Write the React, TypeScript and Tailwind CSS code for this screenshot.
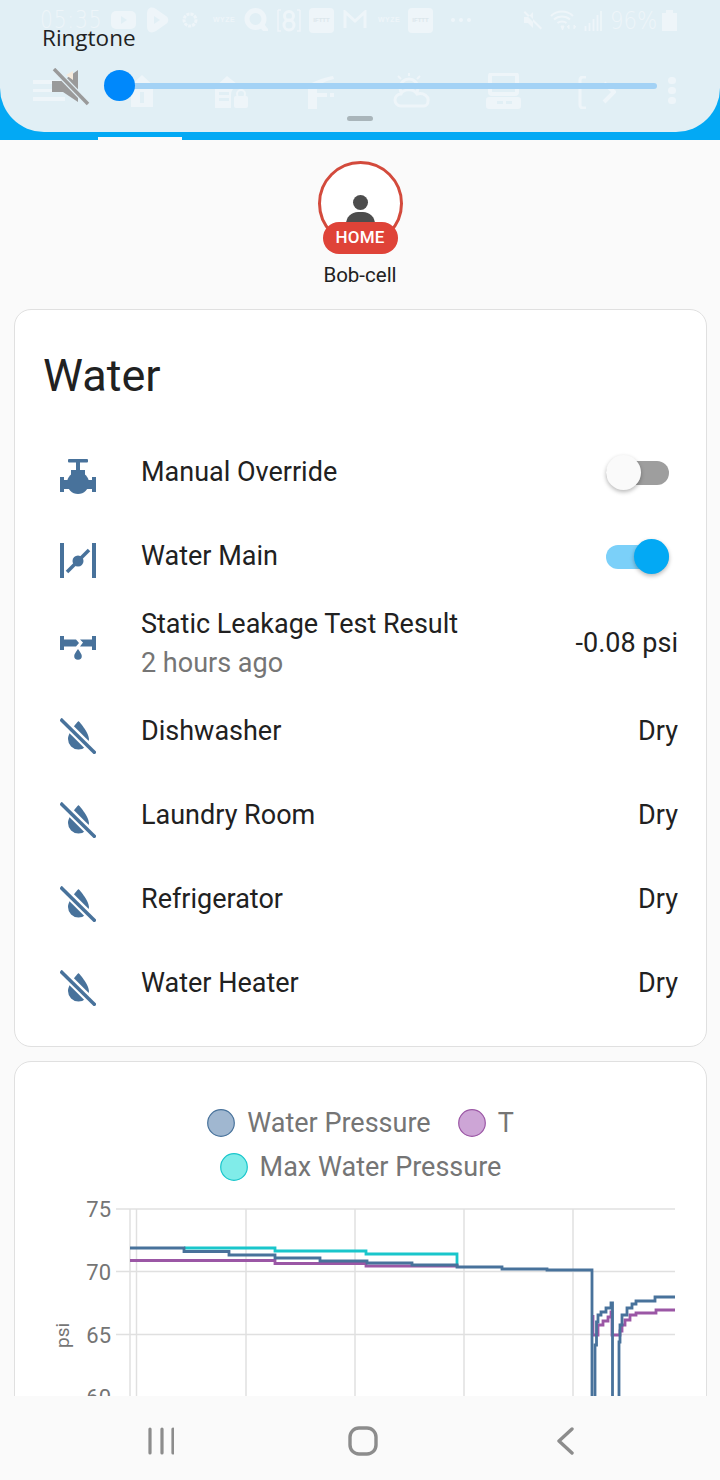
const faint = "#eef5f9";

function Ic({ d, w = 24, h = 24, vb, className = "" }: { d: string; w?: number; h?: number; vb?: string; className?: string }) {
  return (
    <svg width={w} height={h} viewBox={vb ?? "0 0 24 24"} className={className} fill="currentColor">
      <path d={d} />
    </svg>
  );
}

function StatusBar() {
  return (
    <div className="relative h-[40px] text-[#eef5f9]">
      <div className="flex h-[40px] items-center pl-[40px]">
        <span className="w-[60px] text-[24px] font-light leading-[18px] tracking-[1px] font-['DejaVu_Sans',sans-serif] scale-x-[0.84] origin-left whitespace-nowrap">05:35</span>
        <svg width="25" height="18" viewBox="0 0 25 18" className="ml-[11px]">
          <rect width="25" height="18" rx="5" fill={faint} />
          <path d="M10 5l6 4-6 4z" fill="#e1eff5" />
        </svg>
        <svg width="24" height="26" viewBox="0 0 24 26" className="ml-[9px]">
          <path d="M2 7c0-6 4-8 9-5l10 7c3 2 3 6 0 8l-10 7c-5 3-9 1-9-5z" fill={faint} />
          <path d="M9 9l6 4-6 4z" fill="#e1eff5" />
        </svg>
        <svg width="16" height="16" viewBox="0 0 16 16" className="ml-[13px]">
          <circle cx="8" cy="8" r="6" fill="none" stroke={faint} strokeWidth="3" strokeDasharray="3 1" />
        </svg>
        <span className="ml-[15px] w-[20px] text-[7px] tracking-[0.5px] font-bold font-['Liberation_Sans',sans-serif]">WYZE</span>
        <svg width="24" height="24" viewBox="0 0 24 24" className="ml-[11px]">
          <circle cx="11.5" cy="11" r="8.5" fill="none" stroke={faint} strokeWidth="5" />
          <path d="M15 18l4 5h5v-2l-4-5z" fill={faint} />
        </svg>
        <svg width="24" height="23" viewBox="0 0 24 23" className="ml-[9px]">
          <path d="M1 1h3M1 1v21h3M23 1h-3M23 1v21h-3" fill="none" stroke={faint} strokeWidth="1.5" />
          <circle cx="12" cy="7" r="4.5" fill="none" stroke={faint} strokeWidth="3" />
          <circle cx="12" cy="16" r="5" fill="none" stroke={faint} strokeWidth="3" />
        </svg>
        <div className="ml-[8px] w-[25px] h-[25px] rounded-[4px] bg-[#eef5f9] flex items-center justify-center">
          <span className="text-[6px] font-bold text-[#dce7ec] font-['Liberation_Sans',sans-serif]">IFTTT</span>
        </div>
        <svg width="24" height="20" viewBox="0 0 24 20" className="ml-[9px]">
          <path d="M2 18V2l10 9 10-9v16" fill="none" stroke={faint} strokeWidth="3" />
        </svg>
        <span className="ml-[11px] w-[20px] text-[7px] tracking-[0.5px] font-bold font-['Liberation_Sans',sans-serif]">WYZE</span>
        <div className="ml-[10px] w-[25px] h-[25px] rounded-[4px] bg-[#eef5f9] flex items-center justify-center">
          <span className="text-[6px] font-bold text-[#dce7ec] font-['Liberation_Sans',sans-serif]">IFTTT</span>
        </div>
        <div className="ml-[18px] flex gap-[4px]">
          <span className="w-[4px] h-[4px] rounded-full bg-[#eef5f9]" />
          <span className="w-[4px] h-[4px] rounded-full bg-[#eef5f9]" />
          <span className="w-[4px] h-[4px] rounded-full bg-[#eef5f9]" />
        </div>
        <Ic d="M3,9H7L12,4V20L7,15H3V9M4,3L2.6,4.4L19.6,21.4L21,20Z" w={24} h={24} className="ml-[50px]" />
        <svg width="28" height="22" viewBox="0 0 28 22" className="ml-[5px]">
          <path d="M1 7c6-6 16-6 22 0M4 10.5c4.500-4 11.500-4 16 0M7.500 14c2.500-2 6.500-2 9 0" fill="none" stroke={faint} strokeWidth="2" />
          <path d="M11 17h3l-1.500 4zM19 20v-4l-2 2M24 20v-4l2 2" fill={faint} stroke={faint} strokeWidth="1" />
        </svg>
        <svg width="18" height="21" viewBox="0 0 18 21" className="ml-[6px]">
          <path d="M1.500 21v-5M5.500 21v-8M9.500 21v-12M13.500 21v-16M17 21V1" stroke={faint} strokeWidth="1.800" />
        </svg>
        <span className="ml-[8px] w-[48px] text-[25px] leading-none font-light whitespace-nowrap font-['DejaVu_Sans',sans-serif] scale-x-[0.85] origin-left">96%</span>
        <svg width="15" height="21" viewBox="0 0 15 21" className="ml-[4px]">
          <path d="M0 3h4V0h7v3h4v18H0z" fill={faint} />
        </svg>
      </div>
    </div>
  );
}

function FaintToolbar() {
  return (
    <div className="flex items-start h-[40px] mt-[33px] pl-[33px] text-[#eef5f9]">
      <div className="mt-[7px] w-[32px] flex flex-col gap-[5px]">
        <span className="h-[3.500px] bg-[#eef5f9]" />
        <span className="h-[3.500px] bg-[#eef5f9]" />
        <span className="h-[3.500px] bg-[#eef5f9]" />
      </div>
      <svg width="30" height="32" viewBox="0 0 30 32" className="ml-[62px] mt-[2px]">
        <path d="M15 0L30 14h-4v18H4V14H0zM13 17v11h4V17z" fill={faint} />
      </svg>
      <svg width="36" height="32" viewBox="0 0 36 32" className="ml-[56px] mt-[3px]">
        <path d="M14 0L24 8v4h-3c-2 2-3 4-3 7v13H2V13H0zM6 16v3h10v-3zM6 22v3h10v-3z" fill={faint} />
        <rect x="21" y="20" width="14" height="12" rx="2" fill={faint} />
        <circle cx="28" cy="18" r="4" fill="none" stroke={faint} strokeWidth="2" />
      </svg>
      <svg width="26" height="33" viewBox="0 0 26 33" className="ml-[59px] mt-[3px]">
        <path d="M0 10C6 5 14 2 25 0l1 3C18 5 14 7 9 11v22H0z" fill={faint} />
        <path d="M9 17h10v4H9zM22 17h4v4h-4z" fill={faint} />
      </svg>
      <svg width="37" height="36" viewBox="0 0 37 36" className="ml-[59px]">
        <circle cx="16" cy="15" r="9" fill="none" stroke={faint} strokeWidth="3" />
        <path d="M5 3l3 3M16 0v3M27 3l-3 3M1 15h2" stroke={faint} strokeWidth="2" />
        <path d="M8 33a6 6 0 0 1 0-12c2-5 12-6 16 0 7-2 12 3 11 7 0 3-2 5-4 5z" fill="#e1eff5" stroke={faint} strokeWidth="3" />
      </svg>
      <svg width="35" height="36" viewBox="0 0 35 36" className="ml-[56px]">
        <rect x="4" y="1" width="27" height="20" rx="2" fill="none" stroke={faint} strokeWidth="4" />
        <path d="M3 24h29a3 3 0 0 1 3 3v6a3 3 0 0 1-3 3H3a3 3 0 0 1-3-3v-6a3 3 0 0 1 3-3zM11 28v3h6v-3zM20 28v3h6v-3z" fill={faint} fillRule="evenodd" />
      </svg>
      <svg width="38" height="33" viewBox="0 0 38 33" className="ml-[57px] mt-[3px]">
        <path d="M8 1H5a3 3 0 0 0-3 3v25a3 3 0 0 0 3 3h3" fill="none" stroke={faint} strokeWidth="3" />
        <path d="M26 7l10 9-10 10" fill="none" stroke={faint} strokeWidth="4" />
      </svg>
      <div className="ml-[52px] mt-[4px] flex flex-col gap-[3px]">
        <span className="w-[8px] h-[7px] rounded-full bg-[#eef5f9]" />
        <span className="w-[8px] h-[7px] rounded-full bg-[#eef5f9]" />
        <span className="w-[8px] h-[7px] rounded-full bg-[#eef5f9]" />
      </div>
    </div>
  );
}

function Header() {
  return (
    <header className="relative h-[140px] shrink-0 bg-[#03a9f4]">
      <div className="relative h-[132px] rounded-b-[44px] bg-[#e1eff5] overflow-hidden">
        <StatusBar />
        <FaintToolbar />
        <div className="absolute inset-0">
          <div className="absolute left-[42px] top-[27px] text-[22.500px] leading-[22px] text-[#222] font-['Open_Sans',sans-serif]">Ringtone</div>
          <svg width="38" height="38" viewBox="0 0 38 38" className="absolute left-[52px] top-[68px]">
            <path d="M0 13h11L26 2v32L11 24H0z" fill="#9a9a9a" />
            <path d="M14 7l7-4v9z" fill="#f5eadc" />
            <path d="M1 0l35 36" stroke="#e1eff5" strokeWidth="6" />
            <path d="M2 1l34 35" stroke="#9a9a9a" strokeWidth="3.500" />
          </svg>
          <div className="absolute left-[119px] top-[83px] w-[538px] h-[6px] rounded-full bg-[#a3d2f5]" />
          <div className="absolute left-[104px] top-[70px] w-[31px] h-[31px] rounded-full bg-[#0088fb]" />
          <div className="absolute left-[347px] top-[116px] w-[26px] h-[5px] rounded-full bg-[#a9b5ba]" />
        </div>
      </div>
      <div className="absolute left-[98px] bottom-0 w-[84px] h-[3px] bg-[#fafafa]" />
    </header>
  );
}

function Avatar() {
  return (
    <section className="flex flex-col items-center pt-[21px] h-[169px]">
      <div className="relative w-[85px] h-[85px] rounded-full border-[3px] border-[#d34a3c] bg-white overflow-hidden">
        <div className="absolute left-[32px] top-[31px] w-[15px] h-[15px] rounded-full bg-[#4d4d4d]" />
        <div className="absolute left-[25px] top-[48px] w-[29px] h-[24px] rounded-t-[12px] bg-[#4d4d4d]" />
      </div>
      <div className="relative z-10 -mt-[24px] w-[75px] h-[32px] rounded-full bg-[#df4338] text-white text-[17px] font-medium tracking-[0.2px] flex items-center justify-center">HOME</div>
      <div className="mt-[8px] text-[20.500px] leading-[26px] text-[#212121]">Bob-cell</div>
    </section>
  );
}

function ValveIcon() {
  return (
    <svg width="36" height="36" viewBox="0 0 36 36" fill="#48729b" className="mt-[10px] shrink-0">
      <rect x="8" y="0" width="20" height="3.500" rx="1" />
      <rect x="16" y="3" width="4" height="9" />
      <rect x="11" y="11" width="14" height="5" />
      <circle cx="18" cy="24" r="11" />
      <rect x="0" y="18" width="4" height="15" />
      <rect x="32" y="18" width="4" height="15" />
      <rect x="4" y="21" width="28" height="9" />
    </svg>
  );
}
function MainIcon() {
  return (
    <svg width="36" height="36" viewBox="0 0 36 36" fill="#48729b" className="mt-[10px] shrink-0">
      <rect x="0" y="0" width="4" height="35" />
      <rect x="32" y="0" width="4" height="35" />
      <circle cx="18" cy="18" r="5.500" />
      <path d="M7 29L29 7" stroke="#48729b" strokeWidth="3.500" />
    </svg>
  );
}
function LeakIcon() {
  return (
    <svg width="36" height="26" viewBox="0 0 36 26" fill="#48729b" className="mt-[10px] shrink-0">
      <rect x="0" y="0" width="4" height="14" />
      <rect x="32" y="0" width="4" height="14" />
      <path d="M4 3.500h12l3 3.500-3 3.500H4z" />
      <path d="M32 3.500H20l3 3-3 4h12z" />
      <path d="M18 13c2 3 3.800 5 3.800 7a3.800 3.800 0 0 1-7.600 0c0-2 1.800-4 3.800-7z" />
    </svg>
  );
}

function Row({ icon, title, sub, right, tall }: { icon: React.ReactNode; title: string; sub?: string; right: React.ReactNode; tall?: boolean }) {
  return (
    <div className={`flex items-center ${tall ? "h-[91px]" : "h-[84px]"}`}>
      <div className="w-[126px] pl-[45px] pr-[45px] h-full flex items-center justify-center shrink-0">{icon}</div>
      <div className="flex-1 min-w-0">
        <div className="text-[27px] leading-[39px] text-[#212121]">{title}</div>
        {sub && <div className="text-[27px] leading-[39px] text-[#757575]">{sub}</div>}
      </div>
      <div className="text-[27px] text-[#212121]">{right}</div>
    </div>
  );
}

function Toggle({ on }: { on: boolean }) {
  return (
    <div className={`relative w-[63px] h-[24px] mr-[9px] mt-[1px] rounded-full ${on ? "bg-[#7bd0f9]" : "bg-[#9e9e9e]"}`}>
      <div
        className={`absolute -top-[5.500px] w-[35px] h-[35px] rounded-full shadow-[0_2px_4px_rgba(0,0,0,0.28)] ${on ? "right-0 bg-[#03a9f4]" : "left-0 bg-[#fafafa]"}`}
      />
    </div>
  );
}

function DropOff() {
  return (
    <svg width="36" height="36" viewBox="0 0 36 36" className="mt-[10px] shrink-0">
      <path d="M18.5 3C18.5 3 29 14 29 21A10.500 10.500 0 0 1 8 21C8 14 18.500 3 18.500 3Z" fill="#48729b" />
      <path d="M0 0L36 36" stroke="#ffffff" strokeWidth="8" />
      <path d="M0.500 1L35.500 35.500" stroke="#48729b" strokeWidth="3.500" />
    </svg>
  );
}

function WaterCard() {
  return (
    <section className="ml-[14px] mr-[13px] h-[738px] rounded-[17px] border border-[#e0e0e0] bg-white pr-[28px]">
      <h1 className="pl-[28px] pt-[38px] h-[120px] text-[45px] leading-[56px] font-normal text-[#212121]">Water</h1>
      <Row icon={<ValveIcon />} title="Manual Override" right={<Toggle on={false} />} />
      <Row icon={<MainIcon />} title="Water Main" right={<Toggle on={true} />} />
      <Row icon={<LeakIcon />} title="Static Leakage Test Result" sub="2 hours ago" right="-0.08 psi" tall />
      <Row icon={<DropOff />} title="Dishwasher" right="Dry" />
      <Row icon={<DropOff />} title="Laundry Room" right="Dry" />
      <Row icon={<DropOff />} title="Refrigerator" right="Dry" />
      <Row icon={<DropOff />} title="Water Heater" right="Dry" />
    </section>
  );
}

function Legend({ fill, stroke, label }: { fill: string; stroke: string; label: string }) {
  return (
    <div className="flex items-center gap-[12px]">
      <svg width="28" height="28" viewBox="0 0 28 28">
        <circle cx="14" cy="14" r="13.300" fill={fill} stroke={stroke} strokeWidth="1.200" />
      </svg>
      <span className="text-[27px] leading-[44px] text-[#757575]">{label}</span>
    </div>
  );
}

const BLUE_A =
  "130,1248 184,1248 184,1251.500 229,1251.500 229,1255 275,1255 275,1258 320,1258 320,1261 367,1261 367,1263 412,1263 412,1265 457,1265 457,1267 502,1267 502,1269 547,1269 547,1270 592,1270 592,1400";
const BLUE_B =
  "595,1400 595,1345 596.500,1345 596.500,1322 598,1322 598,1315 601,1315 601,1312 606,1312 606,1308 611,1308 611,1303 612.500,1303 612.500,1400";
const BLUE_C =
  "619,1400 619,1342 620,1342 620,1325 622,1325 622,1315 627,1315 627,1308 632,1308 632,1304 636,1304 636,1301 655,1301 655,1297 675,1297";
const TEAL = "184,1248 275,1248 275,1251 366,1251 366,1254 457,1254 457,1266";
const PURPLE_A =
  "130,1260.500 275,1260.500 275,1263.500 366,1263.500 366,1266 457,1266 457,1267";
const PURPLE_B =
  "593,1315 593,1335 598,1335 598,1325 603,1325 603,1321 608,1321 608,1317 611,1317 611,1312 612,1312 612,1335 620,1335 620,1331 622,1331 622,1325 625,1325 625,1320 630,1320 630,1315 636,1315 636,1313 656,1313 656,1310 675,1310";

function Chart() {
  const grid = "#e0e0e0";
  return (
    <svg width="691" height="230" viewBox="15 1195 691 230" className="block">
      {[1209, 1271.5, 1334.5, 1397].map((y) => (
        <line key={y} x1="116" x2="675" y1={y} y2={y} stroke={grid} strokeWidth="1.500" />
      ))}
      {[130, 136.5, 246, 355, 464, 573].map((x) => (
        <line key={x} x1={x} x2={x} y1="1209" y2="1420" stroke={grid} strokeWidth="1.500" />
      ))}
      {[
        ["75", 1209],
        ["70", 1271.5],
        ["65", 1334.5],
        ["60", 1397],
      ].map(([t, y]) => (
        <text key={t} x="111" y={Number(y) + 8} textAnchor="end" fontSize="22" fill="#757575" fontFamily="Roboto, sans-serif">
          {t}
        </text>
      ))}
      <text x="0" y="0" transform="translate(69 1348) rotate(-90)" fontSize="19" fill="#757575" fontFamily="Roboto, sans-serif">
        psi
      </text>
      <polyline points={TEAL} fill="none" stroke="#19c6cb" strokeWidth="2.800" />
      <polyline points={PURPLE_A} fill="none" stroke="#9b57a5" strokeWidth="2.800" />
      <polyline points={PURPLE_B} fill="none" stroke="#9b57a5" strokeWidth="2.800" />
      <polyline points={BLUE_A} fill="none" stroke="#48729b" strokeWidth="2.800" />
      <polyline points={BLUE_B} fill="none" stroke="#48729b" strokeWidth="2.800" />
      <polyline points={BLUE_C} fill="none" stroke="#48729b" strokeWidth="2.800" />
    </svg>
  );
}

function ChartCard() {
  return (
    <section className="mt-[14px] ml-[14px] mr-[13px] h-[420px] rounded-[17px] border border-[#e0e0e0] bg-white">
      <div className="pt-[39px] h-[133px] flex flex-col items-center">
        <div className="flex items-center gap-[27px]">
          <Legend fill="#a0b7d0" stroke="#48729b" label="Water Pressure" />
          <Legend fill="#cda5d6" stroke="#9b57a5" label="T" />
        </div>
        <Legend fill="#80ece9" stroke="#19c6cb" label="Max Water Pressure" />
      </div>
      <Chart />
    </section>
  );
}

function NavBar() {
  return (
    <nav className="relative z-10 h-[84px] shrink-0 bg-[#fafafa] flex items-start">
      <svg width="26" height="28" viewBox="0 0 26 28" className="ml-[148px] mt-[31px]">
        <path d="M2 2v24M14 2v24M25 2v24" stroke="#8c8c8c" strokeWidth="3.200" strokeLinecap="round" />
      </svg>
      <svg width="30" height="30" viewBox="0 0 30 30" className="ml-[174px] mt-[30px]">
        <rect x="2" y="2" width="26" height="26" rx="9" fill="none" stroke="#8c8c8c" strokeWidth="3.400" />
      </svg>
      <svg width="18" height="28" viewBox="0 0 18 28" className="ml-[178px] mt-[31px]">
        <path d="M16 2L3 14l13 12" fill="none" stroke="#8c8c8c" strokeWidth="3.400" strokeLinecap="round" strokeLinejoin="round" />
      </svg>
    </nav>
  );
}

export default function App() {
  return (
    <div className="w-[720px] h-[1480px] flex flex-col overflow-hidden bg-[#fafafa] font-['Roboto',sans-serif]">
      <Header />
      <main className="flex-1 min-h-0 overflow-hidden">
        <Avatar />
        <WaterCard />
        <ChartCard />
      </main>
      <NavBar />
    </div>
  );
}
